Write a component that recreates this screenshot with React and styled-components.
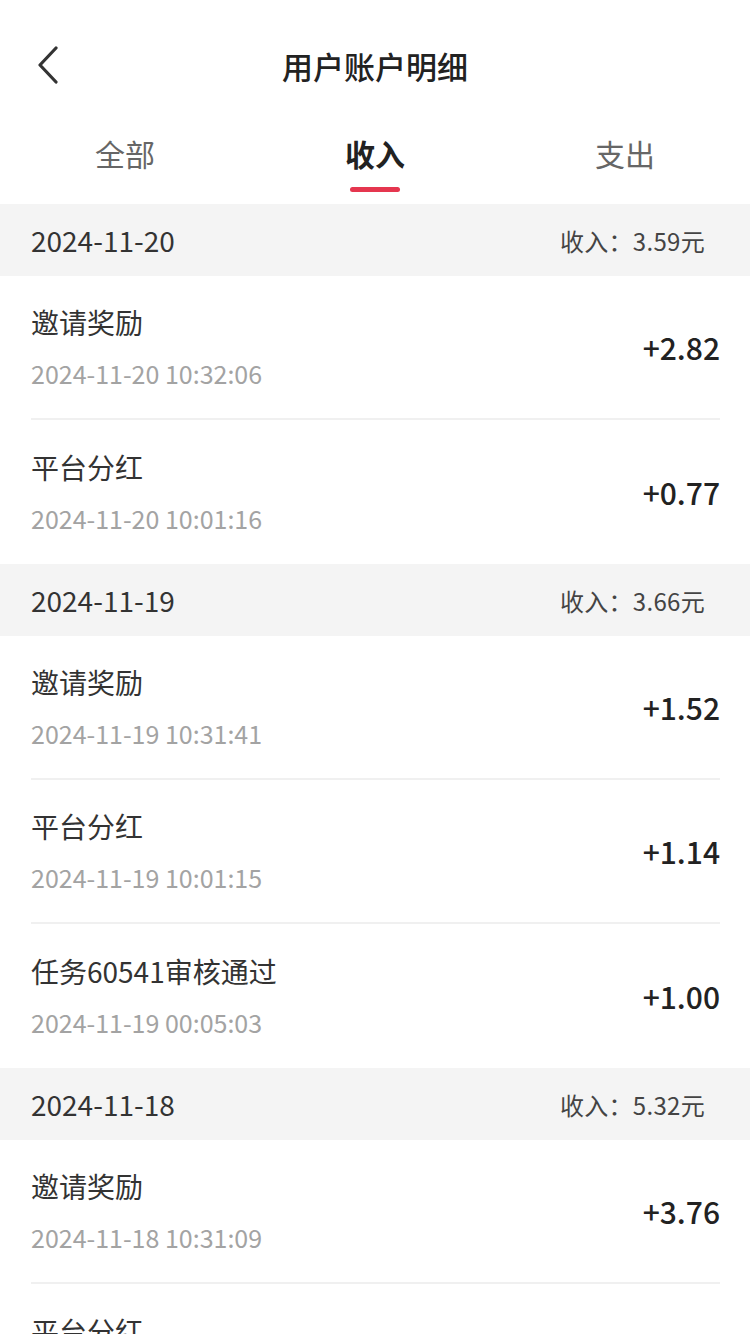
import React from 'react';
import styled, { createGlobalStyle } from 'styled-components';

const GlobalStyle = createGlobalStyle`
  body {
    margin: 0;
    background: #fff;
    font-family: "Noto Sans CJK SC", "Noto Sans", sans-serif;
    color: #333;
  }
`;

const Page = styled.div`
  width: 750px;
  background: #fff;
`;

const NavBar = styled.header`
  height: 130px;
  display: grid;
  grid-template-columns: 100px 1fr 100px;
  align-items: center;
`;

const BackButton = styled.button`
  border: 0;
  background: none;
  padding: 0 0 0 36px;
  height: 50px;
  display: flex;
  align-items: center;
  cursor: pointer;
`;

const Title = styled.h1`
  margin: 0;
  text-align: center;
  font-size: 31px;
  font-weight: 500;
  color: #222;
`;

const Tabs = styled.nav`
  display: grid;
  grid-template-columns: repeat(3, 1fr);
  height: 74px;
`;

const Tab = styled.div`
  display: flex;
  flex-direction: column;
  align-items: center;
  padding-top: 3px;
  font-size: 30px;
  line-height: 40px;
  color: ${(p) => (p.$active ? '#222' : '#666')};
  font-weight: ${(p) => (p.$active ? 700 : 400)};

  &::after {
    content: '';
    width: 50px;
    height: 5px;
    margin-top: 14px;
    border-radius: 3px;
    background: ${(p) => (p.$active ? '#e5364f' : 'transparent')};
  }
`;

const GroupHeader = styled.div`
  height: 72px;
  background: #f4f4f4;
  display: flex;
  align-items: center;
  justify-content: space-between;
  padding: 0 45px 0 31px;
`;

const GroupDate = styled.span`
  font-size: 28px;
  color: #333;
`;

const GroupSum = styled.span`
  font-size: 24px;
  letter-spacing: 0.3px;
  color: #444;
`;

const Row = styled.div`
  height: 144px;
  box-sizing: border-box;
  margin: 0 30px 0 31px;
  display: flex;
  align-items: center;
  justify-content: space-between;
  border-bottom: ${(p) => (p.$last ? '0' : '2px solid #f0f0f0')};
`;

const RowInfo = styled.div`
  display: flex;
  flex-direction: column;
  gap: 19px;
  padding-bottom: 2px;
`;

const RowTitle = styled.span`
  font-size: 28px;
  line-height: 34px;
  color: #333;
`;

const RowTime = styled.span`
  font-size: 25px;
  line-height: 30px;
  color: #a3a3a3;
`;

const Amount = styled.span`
  font-size: 30px;
  font-weight: 500;
  color: #222;
`;

const groups = [
  {
    date: '2024-11-20',
    sum: '3.59',
    items: [
      { title: '邀请奖励', time: '2024-11-20 10:32:06', amount: '+2.82' },
      { title: '平台分红', time: '2024-11-20 10:01:16', amount: '+0.77' },
    ],
  },
  {
    date: '2024-11-19',
    sum: '3.66',
    items: [
      { title: '邀请奖励', time: '2024-11-19 10:31:41', amount: '+1.52' },
      { title: '平台分红', time: '2024-11-19 10:01:15', amount: '+1.14' },
      { title: '任务60541审核通过', time: '2024-11-19 00:05:03', amount: '+1.00' },
    ],
  },
  {
    date: '2024-11-18',
    sum: '5.32',
    items: [
      { title: '邀请奖励', time: '2024-11-18 10:31:09', amount: '+3.76' },
      { title: '平台分红', time: '2024-11-18 10:01:12', amount: '+1.56' },
    ],
  },
];

const BackIcon = () => (
  <svg width="24" height="38" viewBox="0 0 24 38" fill="none">
    <path d="M20 2 L4 19 L20 36" stroke="#333" strokeWidth="3.2" strokeLinecap="round" strokeLinejoin="round" />
  </svg>
);

const App = () => {
  return (
    <Page>
      <GlobalStyle />
      <NavBar>
        <BackButton aria-label="返回">
          <BackIcon />
        </BackButton>
        <Title>用户账户明细</Title>
        <span />
      </NavBar>
      <Tabs>
        <Tab>全部</Tab>
        <Tab $active>收入</Tab>
        <Tab>支出</Tab>
      </Tabs>
      {groups.map((g) => (
        <section key={g.date}>
          <GroupHeader>
            <GroupDate>{g.date}</GroupDate>
            <GroupSum>收入：{g.sum}元</GroupSum>
          </GroupHeader>
          {g.items.map((it, i) => (
            <Row key={it.time} $last={i === g.items.length - 1}>
              <RowInfo>
                <RowTitle>{it.title}</RowTitle>
                <RowTime>{it.time}</RowTime>
              </RowInfo>
              <Amount>{it.amount}</Amount>
            </Row>
          ))}
        </section>
      ))}
    </Page>
  );
};

export default App;
